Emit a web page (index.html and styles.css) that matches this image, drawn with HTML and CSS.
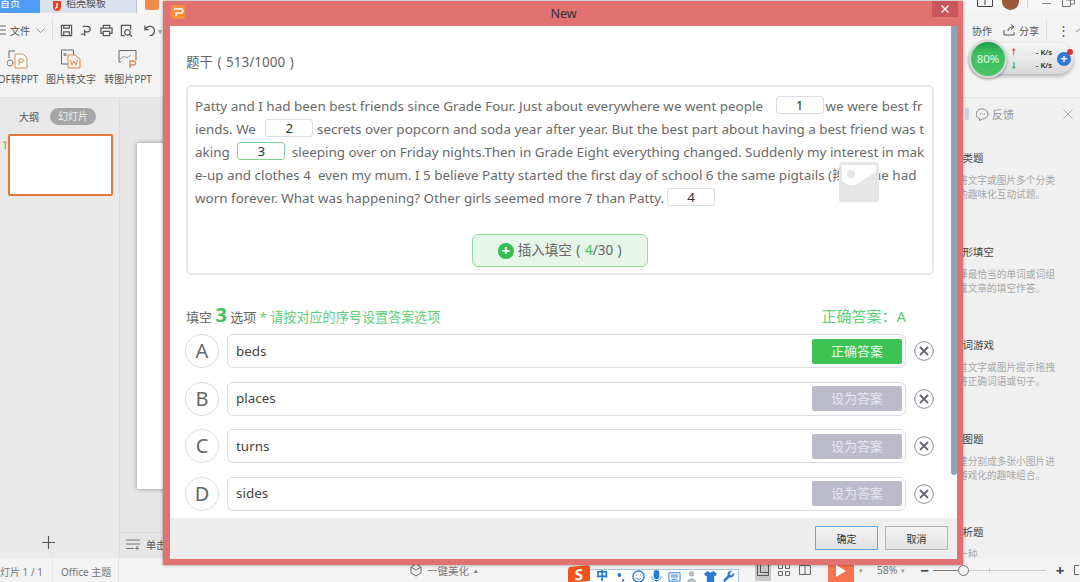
FILE: index.html
```html
<!DOCTYPE html>
<html lang="zh-CN">
<head>
    <meta charset="UTF-8">
    <title>New</title>
    <link rel="stylesheet" href="styles.css">
</head>
<body>
    <div class="app">
        <!-- tabs -->
        <div class="tabbar">
            <div class="tab tab-home">首页</div>
            <div class="tab tab-store">
                <svg class="tab-logo" viewBox="0 0 10 12"><path d="M1 1h8v6a4 4 0 0 1-8 0z" fill="#e8401c"/><path d="M5 3v4l-2 2" stroke="#fff" stroke-width="1.4" fill="none"/></svg>
                稻壳模板
            </div>
            <div class="tab-ppt"></div>
            <div class="win-controls">
                <svg class="win-book" viewBox="0 0 16 7"><path d="M.5 0v6.500h15V0M8 0v5" stroke="#444" fill="none"/></svg>
                <div class="avatar"></div>
                <div class="win-sep"></div>
                <div class="win-min"></div>
                <svg class="win-restore" viewBox="0 0 13 7"><path d="M.5 0v6.500h8V0M4 0h8.500v4H9" stroke="#777" fill="none"/></svg>
            </div>
        </div>

        <!-- quick access -->
        <div class="toolbar">
            <svg class="menu-icon" viewBox="0 0 6 10"><path d="M0 1h6M0 5h6M0 9h6" stroke="#666"/></svg>
            <span class="file-menu">文件</span>
            <svg class="chev" viewBox="0 0 9 5"><path d="M.5.5l4 4 4-4" stroke="#999" fill="none"/></svg>
            <div class="tool-sep"></div>
            <svg class="tool" viewBox="0 0 14 14"><path d="M1.500 1.500h11v11h-11zM4 1.500v3h6v-3M4 12.500v-4h6v4" stroke="#555" stroke-width="1.300" fill="none"/></svg>
            <svg class="tool" viewBox="0 0 14 14"><path d="M3 2.500h5a3 3 0 0 1 0 6H5.500M5 6v7M1 11h3" stroke="#555" stroke-width="1.300" fill="none"/></svg>
            <svg class="tool" viewBox="0 0 14 14"><path d="M3.500 4V1.500h7V4M3 10H1V4.500h12V10h-2M3.500 8h7v4.500h-7z" stroke="#555" stroke-width="1.300" fill="none"/></svg>
            <svg class="tool" viewBox="0 0 14 14"><path d="M5 12.500H1.500v-11h10V6M8 6a3 3 0 1 0 .01 0M10.500 11l2.500 2.500" stroke="#555" stroke-width="1.300" fill="none"/></svg>
            <svg class="tool tool-undo" viewBox="0 0 14 14"><path d="M2 2v4h4M2.500 6A5 5 0 1 1 7 12.500" stroke="#555" stroke-width="1.300" fill="none"/></svg>
            <span class="caret">▾</span>
            <div class="toolbar-right">
                <span class="tool-label">协作</span>
                <svg class="share-icon" viewBox="0 0 13 12"><path d="M1 6v5h10V8M5 7c0-3 2-4 5-4M8 .5L11 3 8 5.500" stroke="#555" fill="none"/></svg>
                <span class="tool-label">分享</span>
                <div class="tool-sep tool-sep-right"></div>
                <span class="dots">⋮</span>
                <svg class="collapse" viewBox="0 0 4 5"><path d="M0 4l4-3" stroke="#888" fill="none"/></svg>
            </div>
        </div>

        <!-- ribbon -->
        <div class="ribbon">
            <div class="ribbon-item ribbon-pdf">
                <svg class="ribbon-icon" viewBox="0 0 22 20"><path d="M2 9V2h6M3 11a3 3 0 1 0 .01 0" stroke="#666" fill="none"/><path d="M8 5h8l4 4v10H8z" stroke="#d98a55" fill="#fff"/><path d="M12 16v-6h3a1.500 1.500 0 0 1 0 3h-3" stroke="#d98a55" fill="none"/></svg>
                <span>OF转PPT</span>
            </div>
            <div class="ribbon-item ribbon-word">
                <svg class="ribbon-icon" viewBox="0 0 22 20"><path d="M1.500 1h12v14h-12z" stroke="#666" fill="none"/><path d="M3.500 4h3v3h-3z" fill="#999"/><path d="M8 6h7l5 4v9H8z" stroke="#d98a55" fill="#fbeee5"/><path d="M10.500 11l1.500 5 2-4 2 4 1.500-5" stroke="#d98a55" fill="none"/></svg>
                <span>图片转文字</span>
            </div>
            <div class="ribbon-item ribbon-pic">
                <svg class="ribbon-icon" viewBox="0 0 22 20"><path d="M4 13H2V1.500h17V11" stroke="#666" fill="none"/><path d="M3 10l4-3 3 2 4-3" stroke="#999" fill="none"/><path d="M13 19v-7h3.500a2 2 0 0 1 0 4H13" stroke="#d98a55" stroke-width="1.400" fill="none"/></svg>
                <span>转图片PPT</span>
            </div>
        </div>

        <!-- work area -->
        <div class="workspace">
            <aside class="slides-panel">
                <div class="panel-tabs">
                    <span>大纲</span>
                    <span class="pill">幻灯片</span>
                </div>
                <div class="thumb-row">
                    <span class="thumb-no">1</span>
                    <div class="thumb"></div>
                </div>
                <svg class="add-slide" viewBox="0 0 13 13"><path d="M6.500 0v13M0 6.500h13" stroke="#555" stroke-width="1.200"/></svg>
            </aside>
            <main class="stage">
                <div class="slide-wrap"><div class="slide"></div></div>
                <div class="notes">
                    <svg class="notes-icon" viewBox="0 0 14 11"><path d="M0 1h14M0 5h14M0 9.500h8M11 7v4M9 9.500h4" stroke="#777"/></svg>
                    单击此处添加备注
                </div>
            </main>
            <aside class="task-panel">
                <div class="task-head">
                    <i class="task-blob"></i>
                    <svg class="chat-icon" viewBox="0 0 13 13"><path d="M6.500 1a5.500 5 0 0 1 0 10L3.500 12.500V10.500A5.500 5 0 0 1 6.500 1z" stroke="#888" fill="none"/><path d="M4 6h1M6 6h1M8 6h1" stroke="#888"/></svg>
                    <span>反馈</span>
                    <svg class="task-close" viewBox="0 0 10 10"><path d="M.5.5l9 9M9.500.5l-9 9" stroke="#aaa"/></svg>
                </div>
                <div class="task-item">
                    <div class="task-title">分类题</div>
                    <p>将文字或图片多个分类<br>的趣味化互动试题。</p>
                </div>
                <div class="task-item">
                    <div class="task-title">图形填空</div>
                    <p>择最恰当的单词或词组<br>成文章的填空作答。</p>
                </div>
                <div class="task-item">
                    <div class="task-title">组词游戏</div>
                    <p>过文字或图片提示拖拽<br>将正确词语或句子。</p>
                </div>
                <div class="task-item">
                    <div class="task-title">拼图题</div>
                    <p>建分割成多张小图片进<br>游戏化的趣味组合。</p>
                </div>
                <div class="task-item">
                    <div class="task-title">解析题</div>
                    <p>一种</p>
                </div>
            </aside>
        </div>

        <!-- status bar -->
        <footer class="statusbar">
            <span class="status-cell status-count">灯片 1 / 1</span>
            <span class="status-cell status-theme">Office 主题</span>
            <div class="beautify">
                <svg class="beautify-icon" viewBox="0 0 12 14"><path d="M6 1l5 3v6l-5 3-5-3V4zM1 4l5 3 5-3" stroke="#666" fill="none"/></svg>
                一键美化 <small>▴</small>
            </div>
            <div class="status-right">
                <div class="view-btn view-on">
                    <svg viewBox="0 0 12 12"><path d="M.5.500h11v11H.5zM3.500.5v8h8" stroke="#555" fill="none"/></svg>
                </div>
                <svg class="view-icon" viewBox="0 0 12 12"><path d="M.5.500h4v4h-4zM7.500.5h4v4h-4zM.5 7.500h4v4h-4zM7.500 7.500h4v4h-4z" stroke="#666" fill="none"/></svg>
                <svg class="view-icon view-book" viewBox="0 0 12 12"><path d="M.5 1.500h11v9H.5zM6 1.500v9" stroke="#666" fill="none"/></svg>
                <div class="play"><i></i></div>
                <small class="play-caret">▾</small>
                <span class="zoom-pct">58%</span>
                <small class="zoom-caret">▾</small>
                <span class="zoom-btn zoom-minus">−</span>
                <div class="slider"><i class="slider-fill"></i><i class="slider-tick"></i><i class="slider-knob"></i></div>
                <span class="zoom-btn zoom-plus">+</span>
                <svg class="fit-icon" viewBox="0 0 6 12"><path d="M5 1.500H.5v9H5" stroke="#666" fill="none"/></svg>
            </div>
        </footer>
    </div>

    <!-- floating speed widget -->
    <div class="speed">
        <div class="speed-ball">80%</div>
        <div class="speed-rates">
            <div><b class="up">↑</b><span>- K/s</span></div>
            <div><b class="down">↓</b><span>- K/s</span></div>
        </div>
        <div class="speed-plus">+</div>
    </div>

    <!-- input method bar -->
    <div class="ime">
        <div class="ime-logo">S</div>
        <div class="ime-bar">
            <span class="ime-zh">中</span>
            <span class="ime-dot">•,</span>
            <svg viewBox="0 0 14 14"><circle cx="7" cy="7" r="6" stroke="#2b7bd0" stroke-width="1.500" fill="none"/><path d="M4 8.500c1.500 2 4.500 2 6 0M5 5v1M9 5v1" stroke="#2b7bd0" fill="none"/></svg>
            <svg viewBox="0 0 14 14"><rect x="4" y="0" width="6" height="10" rx="3" fill="#2b7bd0"/><path d="M2 7c0 6 10 6 10 0M7 11v3" stroke="#2b7bd0" fill="none"/></svg>
            <svg viewBox="0 0 14 14"><path d="M1 3h12v9H1z" stroke="#2b7bd0" fill="none"/><path d="M3 5.500h8M3 7.500h8M4 10h6" stroke="#2b7bd0"/></svg>
            <svg viewBox="0 0 14 14"><circle cx="6" cy="4" r="3" fill="#b4bcc6"/><path d="M1 14c0-7 10-7 10 0z" fill="#b4bcc6"/></svg>
            <svg viewBox="0 0 14 14"><path d="M4 1L0 4l2 3 1-1v8h8V6l1 1 2-3-4-3-3 2z" fill="#2b7bd0"/></svg>
            <svg viewBox="0 0 14 14"><path d="M13 3l-3 3-2-2 3-3a4 4 0 0 0-5 5L1 11l2 2 5-5a4 4 0 0 0 5-5z" fill="#2b7bd0"/></svg>
        </div>
    </div>

    <!-- dialog -->
    <div class="dialog">
        <div class="dialog-title">
            <div class="dialog-logo">
                <svg viewBox="0 0 14 14"><path d="M3 4h7a2 2 0 0 1 0 4H5v3" stroke="#fff" stroke-width="1.400" fill="none"/></svg>
            </div>
            <span>New</span>
            <div class="dialog-close">
                <svg viewBox="0 0 8 8"><path d="M.5.500l7 7M7.500.5l-7 7" stroke="#fff" stroke-width="1.300"/></svg>
            </div>
        </div>
        <div class="dialog-body">
            <div class="stem-label">题干 ( 513/1000 )</div>
            <div class="stem-box">
                <p class="stem-text">Patty and I had been best friends since Grade Four. Just about everywhere we went people <span class="blank blank-first">1</span>we were best friends. We <span class="blank blank-second">2</span> secrets over popcorn and soda year after year. But the best part about having a best friend was taking <span class="blank blank-on">3</span> sleeping over on Friday nights.Then in Grade Eight everything changed. Suddenly my interest in make-up and clothes 4 &nbsp;even my mum. I 5 believe Patty started the first day of school 6 the same pigtails (辫子) she had worn forever. What was happening? Other girls seemed more 7 than Patty.<span class="blank blank-last">4</span></p>
                <div class="img-badge">
                    <svg viewBox="0 0 40 40"><rect width="40" height="40" rx="2" fill="#e6e6e6"/><path d="M3 3h34v7L18 22c-6 3-11 0-15-3z" fill="#fff"/><circle cx="12" cy="12" r="4" fill="#e6e6e6"/></svg>
                </div>
                <div class="insert-wrap">
                    <div class="insert-btn">
                        <i class="insert-plus">+</i>
                        <span>插入填空 ( <em>4</em>/30 )</span>
                    </div>
                </div>
            </div>
            <div class="opt-head">
                <span>填空 <b>3</b> 选项 <em>* 请按对应的序号设置答案选项</em></span>
                <span class="opt-answer">正确答案：A</span>
            </div>
            <div class="opt-list">
                <div class="opt-row">
                    <div class="opt-letter">A</div>
                    <div class="opt-input"><span>beds</span><div class="set-btn set-btn-on">正确答案</div></div>
                    <svg class="opt-del" viewBox="0 0 20 20"><circle cx="10" cy="10" r="9.300" stroke="#8a8a9a" fill="none"/><path d="M6 6l8 8M14 6l-8 8" stroke="#667" stroke-width="1.800"/></svg>
                </div>
                <div class="opt-row">
                    <div class="opt-letter">B</div>
                    <div class="opt-input"><span>places</span><div class="set-btn">设为答案</div></div>
                    <svg class="opt-del" viewBox="0 0 20 20"><circle cx="10" cy="10" r="9.300" stroke="#8a8a9a" fill="none"/><path d="M6 6l8 8M14 6l-8 8" stroke="#667" stroke-width="1.800"/></svg>
                </div>
                <div class="opt-row">
                    <div class="opt-letter">C</div>
                    <div class="opt-input"><span>turns</span><div class="set-btn">设为答案</div></div>
                    <svg class="opt-del" viewBox="0 0 20 20"><circle cx="10" cy="10" r="9.300" stroke="#8a8a9a" fill="none"/><path d="M6 6l8 8M14 6l-8 8" stroke="#667" stroke-width="1.800"/></svg>
                </div>
                <div class="opt-row">
                    <div class="opt-letter">D</div>
                    <div class="opt-input"><span>sides</span><div class="set-btn">设为答案</div></div>
                    <svg class="opt-del" viewBox="0 0 20 20"><circle cx="10" cy="10" r="9.300" stroke="#8a8a9a" fill="none"/><path d="M6 6l8 8M14 6l-8 8" stroke="#667" stroke-width="1.800"/></svg>
                </div>
            </div>
            <div class="scroll-thumb"></div>
        </div>
        <div class="dialog-foot">
            <div class="foot-btn foot-ok">确定</div>
            <div class="foot-btn">取消</div>
        </div>
    </div>
</body>
</html>
```

FILE: styles.css
```css
* {
    box-sizing: border-box;
}
html, body {
    margin: 0;
    height: 100%;
}
body {
    width: 1080px;
    height: 582px;
    position: relative;
    overflow: hidden;
    font-family: "Noto Sans", "Noto Sans CJK SC", sans-serif;
    color: #555;
    background: #f3f3f3;
}
p {
    margin: 0;
}
svg {
    display: block;
}
.app {
    display: flex;
    flex-direction: column;
    height: 582px;
}

/* tabs */
.tabbar {
    display: flex;
    height: 14px;
    flex: none;
    background: #f6f6f6;
    font-size: 10px;
    overflow: hidden;
}
.tab {
    display: flex;
    align-items: flex-start;
    height: 13px;
    line-height: 6px;
}
.tab-home {
    width: 40px;
    background: #4d9df8;
    color: #fff;
}
.tab-store {
    width: 97px;
    padding-left: 12px;
    gap: 4px;
    background: #d9e3ef;
    border-right: 1px solid #b7c4d3;
    color: #555;
}
.tab-logo {
    width: 10px;
    height: 12px;
}
.tab-ppt {
    width: 14px;
    height: 10px;
    margin-left: 8px;
    background: #f28a4b;
    border-radius: 0 0 2px 2px;
}
.win-controls {
    display: flex;
    margin-left: auto;
    height: 14px;
    padding-right: 5px;
    align-items: flex-start;
}
.win-book {
    width: 16px;
    height: 7px;
}
.avatar {
    width: 17px;
    height: 10px;
    margin-left: 9px;
    background: #9b5a35;
    border-radius: 0 0 9px 9px;
}
.win-sep {
    width: 1px;
    height: 8px;
    margin-left: 8px;
    background: #ccc;
}
.win-min {
    width: 9px;
    height: 1px;
    margin: 3px 0 0 14px;
    background: #888;
}
.win-restore {
    width: 13px;
    height: 7px;
    margin-left: 11px;
}

/* quick access */
.toolbar {
    display: flex;
    align-items: center;
    height: 32px;
    flex: none;
    font-size: 10px;
    white-space: nowrap;
}
.menu-icon {
    width: 6px;
    height: 10px;
    margin-right: 4px;
}
.file-menu {
    width: 20px;
}
.chev {
    width: 9px;
    height: 5px;
    margin: 0 7px 0 6px;
}
.tool-sep {
    width: 1px;
    height: 20px;
    background: #ddd;
    margin-right: 7px;
}
.tool {
    width: 13px;
    height: 13px;
    margin-right: 7px;
}
.tool-undo {
    margin: 0 2px 0 3px;
}
.caret {
    font-size: 8px;
    color: #999;
}
.toolbar-right {
    display: flex;
    align-items: center;
    margin-left: auto;
}
.share-icon {
    width: 13px;
    height: 12px;
    margin: 0 3px 0 11px;
}
.tool-sep-right {
    margin: 0 10px 0 7px;
}
.dots {
    width: 19px;
    font-size: 13px;
    color: #555;
}
.collapse {
    width: 4px;
    height: 5px;
}

/* ribbon */
.ribbon {
    display: flex;
    height: 52px;
    flex: none;
    border-bottom: 1px solid #e2e2e2;
    font-size: 10px;
}
.ribbon-item {
    display: flex;
    flex-direction: column;
    align-items: center;
    gap: 2px;
    padding-top: 3px;
    white-space: nowrap;
}
.ribbon-icon {
    width: 22px;
    height: 20px;
}
.ribbon-pdf {
    width: 36px;
    margin-right: 10px;
}
.ribbon-word {
    width: 50px;
    margin-right: 8px;
}
.ribbon-pic {
    width: 48px;
}

/* work area */
.workspace {
    display: grid;
    grid-template-columns: 120px 1fr 128px;
    flex: 1;
    min-height: 0;
    background: #e6e6e6;
}
.slides-panel {
    display: flex;
    flex-direction: column;
    background: #e9e9e9;
    border-right: 1px solid #dcdcdc;
}
.panel-tabs {
    display: flex;
    align-items: center;
    gap: 11px;
    height: 18px;
    margin-top: 9px;
    padding-left: 19px;
    font-size: 10px;
}
.pill {
    width: 46px;
    height: 17px;
    line-height: 17px;
    text-align: center;
    background: #a6a6a6;
    color: #eee;
    border-radius: 9px;
}
.thumb-row {
    display: flex;
    margin-top: 9px;
}
.thumb-no {
    width: 8px;
    font-size: 10px;
    line-height: 22px;
    color: #d9712c;
    overflow: hidden;
    direction: rtl;
}
.thumb {
    width: 105px;
    height: 62px;
    background: #fff;
    border: 2px solid #e0793a;
    border-radius: 2px;
}
.add-slide {
    width: 13px;
    height: 13px;
    margin: auto 0 9px 42px;
}
.stage {
    display: flex;
    flex-direction: column;
    min-width: 0;
}
.slide-wrap {
    flex: 1;
    padding: 45px 0 0 17px;
}
.slide {
    height: 346px;
    background: #fff;
    box-shadow: 0 0 5px rgba(0, 0, 0, 0.35);
}
.notes {
    display: flex;
    align-items: center;
    gap: 6px;
    height: 26px;
    padding-left: 6px;
    padding-bottom: 3px;
    border-top: 1px solid #d8d8d8;
    font-size: 10px;
    white-space: nowrap;
}
.notes-icon {
    width: 14px;
    height: 11px;
}
.task-panel {
    background: #f0f0f0;
    overflow: hidden;
}
.task-head {
    display: flex;
    align-items: center;
    height: 16px;
    margin-top: 8px;
    padding-left: 13px;
    font-size: 11px;
    color: #999;
}
.task-blob {
    width: 4px;
    height: 12px;
    margin-right: 7px;
    background: #c3d3ea;
    border-radius: 2px;
}
.chat-icon {
    width: 13px;
    height: 13px;
    margin-right: 3px;
}
.task-close {
    width: 10px;
    height: 10px;
    margin-left: auto;
    margin-right: 7px;
}
.task-item {
    height: 93.500px;
    padding-top: 29px;
    white-space: nowrap;
}
.task-title {
    height: 14px;
    font-size: 10.500px;
    line-height: 14px;
    color: #444;
}
.task-item p {
    padding-left: 6px;
    margin-top: 9px;
    font-size: 9.700px;
    line-height: 14px;
    color: #a8a8a8;
}

/* status bar */
.statusbar {
    display: flex;
    align-items: center;
    height: 24px;
    flex: none;
    font-size: 10px;
    color: #777;
    background: #f3f3f3;
}
.status-cell {
    display: flex;
    align-items: center;
    height: 24px;
    padding-top: 2px;
    white-space: nowrap;
    border-right: 1px solid #e4e4e4;
}
.status-count {
    width: 53px;
}
.status-theme {
    width: 66px;
    padding-left: 8px;
}
.beautify {
    display: flex;
    align-items: center;
    gap: 5px;
    margin-left: 291px;
    white-space: nowrap;
    font-size: 10.500px;
}
.beautify small {
    font-size: 7px;
}
.beautify-icon {
    width: 12px;
    height: 14px;
}
.status-right {
    display: flex;
    align-items: center;
    margin-left: auto;
    width: 325px;
    height: 24px;
    overflow: hidden;
}
.view-btn {
    display: flex;
    align-items: center;
    justify-content: center;
    width: 16px;
    height: 22px;
    background: #c8c8c8;
    border-radius: 2px;
}
.view-btn svg {
    width: 12px;
    height: 12px;
}
.view-icon {
    width: 12px;
    height: 12px;
    margin-left: 7px;
}
.view-book {
    margin-left: 9px;
}
.play {
    display: flex;
    align-items: center;
    justify-content: center;
    width: 26px;
    height: 22px;
    margin: 2px 0 0 17px;
    background: #f9734e;
}
.play i {
    border-left: 10px solid #fff;
    border-top: 6px solid transparent;
    border-bottom: 6px solid transparent;
}
.play-caret, .zoom-caret {
    font-size: 7px;
    color: #999;
}
.play-caret {
    margin: 0 14px 0 5px;
}
.zoom-pct {
    margin-right: 3px;
    font-size: 10.500px;
}
.zoom-caret {
    margin-right: 15px;
}
.zoom-btn {
    width: 10px;
    font-size: 15px;
    line-height: 16px;
    font-weight: 700;
    color: #444;
    text-align: center;
}
.slider {
    position: relative;
    width: 113px;
    height: 1px;
    margin: 0 9px 0 4px;
    background: #ccc;
}
.slider-fill {
    position: absolute;
    left: 0;
    top: 0;
    width: 26px;
    height: 1px;
    background: #777;
}
.slider-tick {
    position: absolute;
    left: 56px;
    top: -2px;
    width: 1px;
    height: 5px;
    background: #ccc;
}
.slider-knob {
    position: absolute;
    left: 25px;
    top: -5px;
    width: 11px;
    height: 11px;
    background: #f3f3f3;
    border: 1.500px solid #777;
    border-radius: 50%;
}
.fit-icon {
    width: 6px;
    height: 12px;
    margin-left: 9px;
}

/* floating speed widget */
.speed {
    position: absolute;
    left: 970px;
    top: 43px;
    width: 103px;
    height: 31px;
    display: flex;
    align-items: center;
    background: linear-gradient(#f7f7f7, #d9d9d9);
    border-radius: 16px;
    box-shadow: 0 2px 4px rgba(0, 0, 0, 0.3);
}
.speed-ball {
    width: 38px;
    height: 38px;
    margin-left: -1px;
    flex: none;
    line-height: 34px;
    text-align: center;
    font-size: 11.500px;
    color: #e8f6ea;
    background: linear-gradient(#1f9a48 0%, #3cbf5e 30%, #49c469 100%);
    border: 2px solid #d5dad6;
    border-radius: 50%;
    box-shadow: 0 1px 3px rgba(0, 0, 0, 0.4);
}
.speed-rates {
    width: 42px;
    margin-left: 3px;
    font-size: 7.500px;
    line-height: 13px;
    color: #222;
    font-weight: 600;
}
.speed-rates div {
    display: flex;
    justify-content: space-between;
}
.up {
    color: #e2574c;
}
.down {
    color: #2da84a;
}
.speed-plus {
    position: relative;
    width: 14px;
    height: 14px;
    margin-left: 5px;
    line-height: 13px;
    text-align: center;
    font-size: 12px;
    font-weight: 700;
    color: #fff;
    background: #3478d8;
    border-radius: 50%;
}
.speed-plus::after {
    content: "";
    position: absolute;
    right: -2px;
    top: -3px;
    width: 6px;
    height: 6px;
    background: #d8302c;
    border-radius: 50%;
}

/* input method bar */
.ime {
    position: absolute;
    left: 568px;
    top: 566px;
    display: flex;
    align-items: flex-end;
    height: 16px;
}
.ime-logo {
    width: 22px;
    height: 16px;
    line-height: 16px;
    text-align: center;
    font-size: 15px;
    font-weight: 700;
    color: #fff;
    background: #f0541e;
    border-radius: 3px 3px 0 0;
    transform: skewY(-6deg);
}
.ime-bar {
    display: flex;
    align-items: center;
    gap: 5px;
    width: 149px;
    height: 13px;
    padding-left: 6px;
    background: #fff;
    border-top: 1px solid #9ec3ea;
    border-right: 1px solid #9ec3ea;
    overflow: hidden;
}
.ime-bar svg {
    width: 13px;
    height: 13px;
    flex: none;
}
.ime-zh {
    width: 12px;
    font-size: 12px;
    line-height: 12px;
    font-weight: 700;
    color: #1f73c9;
}
.ime-dot {
    width: 14px;
    padding-left: 4px;
    font-size: 12px;
    line-height: 10px;
    font-weight: 700;
    color: #1f73c9;
}

/* dialog */
.dialog {
    position: absolute;
    left: 163px;
    top: 1px;
    width: 800px;
    height: 564px;
    display: flex;
    flex-direction: column;
    padding: 0 6px 6px 7px;
    background: #e07272;
    box-shadow: 0 0 3px rgba(0, 0, 0, 0.4);
}
.dialog-title {
    display: flex;
    align-items: center;
    justify-content: center;
    position: relative;
    height: 25px;
    flex: none;
    font-size: 12.500px;
    color: #333;
}
.dialog-logo {
    position: absolute;
    left: 1px;
    top: 4px;
    width: 14px;
    height: 14px;
    background: #f9903c;
    border-radius: 3px;
}
.dialog-close {
    position: absolute;
    right: -1px;
    top: 0;
    width: 26px;
    height: 16px;
    display: flex;
    align-items: center;
    justify-content: center;
    background: #c9565a;
}
.dialog-close svg {
    width: 8px;
    height: 8px;
}
.dialog-body {
    position: relative;
    height: 492px;
    flex: none;
    padding: 0 23px 0 16px;
    background: #fff;
    overflow: hidden;
}
.stem-label {
    padding-top: 27px;
    height: 59px;
    font-size: 13.500px;
    line-height: 18px;
    word-spacing: 1px;
    color: #666;
}
.stem-box {
    position: relative;
    height: 190px;
    padding: 8px 7.500px 0 7px;
    border: 2px solid #e8e8ec;
    border-radius: 6px;
}
.stem-text {
    font-size: 13.450px;
    line-height: 23px;
    color: #6a6a6a;
    word-break: break-all;
}
.blank {
    display: inline-block;
    width: 48px;
    height: 18px;
    line-height: 16px;
    margin: 0 3px 0 4px;
    text-align: center;
    vertical-align: 1px;
    color: #333;
    background: #fff;
    border: 1px solid #dcdce2;
    border-radius: 3px;
}
.blank-first {
    margin: 0 2px 0 9px;
}
.blank-second {
    margin: 0 0 0 6px;
}
.blank-last {
    margin-left: 3px;
}
.blank-on {
    border-color: #7ed492;
}
.img-badge {
    position: absolute;
    left: 651px;
    top: 75px;
    width: 40px;
    height: 40px;
}
.insert-wrap {
    display: flex;
    justify-content: center;
    margin-top: 24px;
}
.insert-btn {
    display: flex;
    align-items: center;
    justify-content: center;
    gap: 4px;
    width: 176px;
    height: 33px;
    padding-bottom: 3px;
    font-size: 13.500px;
    word-spacing: 1px;
    color: #666;
    background: #e6f7ea;
    border: 1px solid #8fdc9f;
    border-radius: 6px;
}
.insert-btn em {
    font-style: normal;
    color: #3cc35c;
}
.insert-plus {
    width: 16px;
    height: 16px;
    margin-top: 3px;
    line-height: 15px;
    text-align: center;
    font-style: normal;
    font-size: 15px;
    font-weight: 700;
    color: #fff;
    background: #36bd56;
    border-radius: 50%;
}
.opt-head {
    display: flex;
    align-items: center;
    height: 59px;
    padding-top: 22px;
    padding-right: 28px;
    justify-content: space-between;
    font-size: 13px;
    color: #666;
}
.opt-head b {
    font-size: 20px;
    line-height: 20px;
    color: #3cc35c;
}
.opt-head em {
    font-style: normal;
    font-size: 13.100px;
    color: #5ed077;
}
.opt-answer {
    font-size: 15px;
    color: #5ed077;
}
.opt-list {
    display: flex;
    flex-direction: column;
    gap: 13.500px;
    margin-left: -1px;
}
.opt-row {
    display: flex;
    align-items: center;
    height: 34px;
}
.opt-letter {
    width: 34px;
    height: 34px;
    flex: none;
    line-height: 32px;
    text-align: center;
    font-size: 20px;
    color: #666;
    border: 1px solid #dcdce0;
    border-radius: 50%;
}
.opt-input {
    display: flex;
    align-items: center;
    justify-content: space-between;
    width: 679px;
    height: 34px;
    margin-left: 8px;
    padding: 0 3px 0 8px;
    font-size: 13.450px;
    color: #444;
    border: 1px solid #dcdce6;
    border-radius: 6px;
}
.opt-input span {
    padding-bottom: 1px;
}
.set-btn {
    width: 90px;
    height: 25px;
    line-height: 25px;
    text-align: center;
    font-size: 13px;
    color: #e6e6ee;
    background: #bcbbcb;
    border-radius: 2px;
}
.set-btn-on {
    color: #eefaf0;
    background: #3cc354;
}
.opt-del {
    width: 20px;
    height: 20px;
    margin-left: 8px;
}
.scroll-thumb {
    position: absolute;
    right: 0;
    top: 0;
    width: 6px;
    height: 449px;
    background: #8fa3b8;
    border-radius: 0 0 3px 3px;
}
.dialog-foot {
    display: flex;
    justify-content: flex-end;
    gap: 7px;
    flex: 1;
    padding: 8px 9px 0 0;
    background: #eee;
}
.foot-btn {
    width: 63px;
    height: 24px;
    line-height: 24px;
    text-align: center;
    font-size: 10px;
    color: #333;
    background: linear-gradient(#f2f2f2, #e2e2e2);
    border: 1px solid #b4b4b4;
}
.foot-ok {
    border-color: #5fa9ea;
}
```
